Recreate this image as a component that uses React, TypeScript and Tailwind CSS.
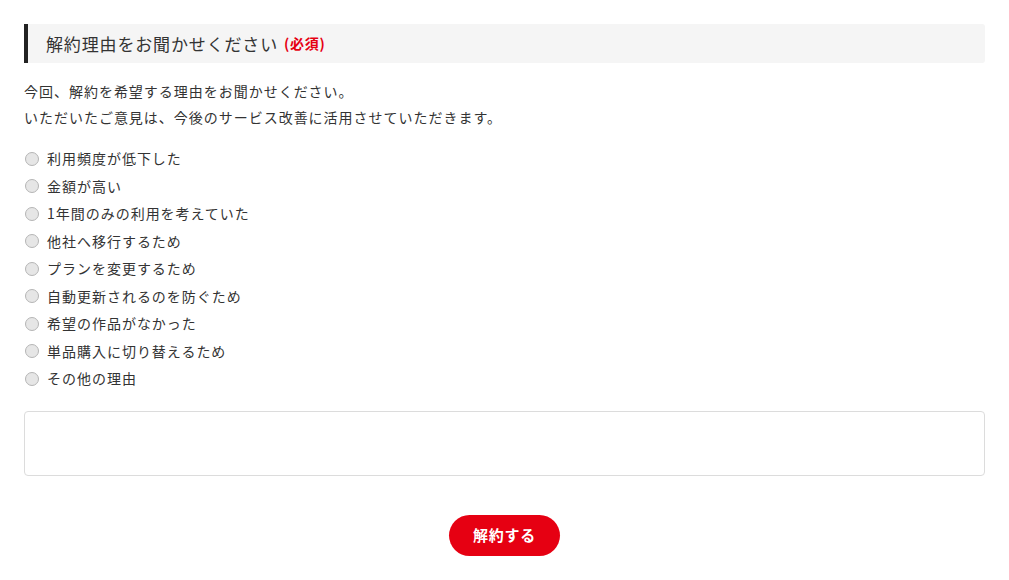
import React from "react";

const reasons = [
  "利用頻度が低下した",
  "金額が高い",
  "1年間のみの利用を考えていた",
  "他社へ移行するため",
  "プランを変更するため",
  "自動更新されるのを防ぐため",
  "希望の作品がなかった",
  "単品購入に切り替えるため",
  "その他の理由",
];

export default function App() {
  return (
    <div
      className="w-[1009px] min-h-[580px] bg-white px-6 pt-6 text-[#333]"
      style={{ fontFamily: '"Noto Sans CJK JP", "Noto Sans", sans-serif' }}
    >
      <div className="flex h-[39px] items-center rounded-r-[3px] border-l-4 border-[#222] bg-[#f5f5f5] pl-[18px]">
        <span className="text-[17px] font-normal tracking-[0.05em] text-[#333]">解約理由をお聞かせください</span>
        <span className="ml-[6px] text-[14px] font-bold tracking-[0.05em] text-[#e60012]">(必須)</span>
      </div>
      <div className="mt-[15px] text-[14px] leading-[26px] tracking-[0.07em] text-[#333]">
        <p>今回、解約を希望する理由をお聞かせください。</p>
        <p>いただいたご意見は、今後のサービス改善に活用させていただきます。</p>
      </div>
      <div className="mt-[15px] flex flex-col">
        {reasons.map((r) => (
          <label key={r} className="flex h-[27.5px] items-center text-[14px] tracking-[0.07em] text-[#333]">
            <span className="ml-px mr-[8px] h-[14px] w-[14px] rounded-full border border-[#b5b5b5] bg-[#e6e6e6]" />
            <span>{r}</span>
          </label>
        ))}
      </div>
      <div className="mt-[18px] h-[65px] w-full rounded-[4px] border border-[#dcdcdc] bg-white" />
      <div className="mt-[39px] flex justify-center">
        <button className="h-[41px] w-[111px] rounded-full bg-[#e60012] text-[15px] font-bold tracking-[0.05em] text-white">
          解約する
        </button>
      </div>
    </div>
  );
}
